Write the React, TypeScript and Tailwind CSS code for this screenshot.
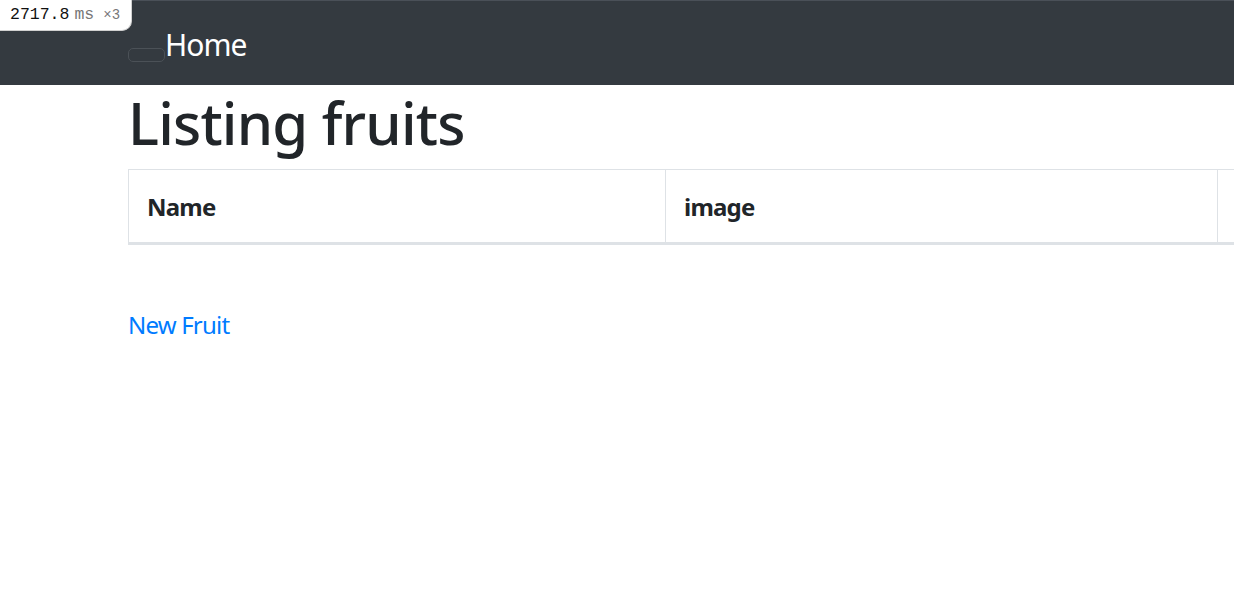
const font = { fontFamily: '"Noto Sans", "Segoe UI", Arial, sans-serif' };

const ProfilerBadge = () => (
    <div className="absolute left-0 top-0 z-10 flex h-[31px] w-[132px] items-center rounded-br-[10px] border border-t-0 border-l-0 border-[#d0d0d0] bg-white pl-[10px] font-['Liberation_Mono',monospace] text-[16.5px]">
        <span className="text-[#111]">2717.8</span>
        <span className="ml-[5px] text-[#777]">ms</span>
        <span className="ml-[9px] text-[14px] text-[#777]">×3</span>
    </div>
);

const App = () => {
    return (
        <div className="relative min-h-[594px] w-[1234px] overflow-hidden bg-white text-[#212529]" style={font}>
            <ProfilerBadge />

            <nav className="h-[85px] border-t border-[#4a5058] bg-[#343a40]">
                <div className="flex h-full items-start pl-[128px] pt-[21px]">
                    <span className="mt-[26px] h-[14px] w-[37px] rounded-[5px] border border-[#4b5157]" />
                    <a className="text-[30px] leading-[45px] tracking-[-1px] text-white">Home</a>
                </div>
            </nav>

            <main className="pl-[128px]">
                <h1 className="mb-[12px] pt-[3px] text-[58px] leading-[69px] font-medium tracking-[-0.8px]">Listing fruits</h1>

                <table className="w-[1200px] border-collapse text-[24px] leading-[36px]">
                    <thead>
                        <tr>
                            <th className="w-[537px] border border-b-[3px] border-[#dee2e6] px-[18px] pt-[19px] pb-[17px] text-left font-bold tracking-[-0.8px]">Name</th>
                            <th className="w-[552px] border border-b-[3px] border-[#dee2e6] px-[18px] pt-[19px] pb-[17px] text-left font-bold tracking-[-0.8px]">image</th>
                            <th className="border border-b-[3px] border-[#dee2e6] p-[18px]" colSpan={2}></th>
                        </tr>
                    </thead>
                    <tbody></tbody>
                </table>

                <p className="mt-[62px]">
                    <a className="text-[24px] leading-[36px] tracking-[-0.8px] text-[#007bff]">New Fruit</a>
                </p>
            </main>
        </div>
    );
};

export default App;
